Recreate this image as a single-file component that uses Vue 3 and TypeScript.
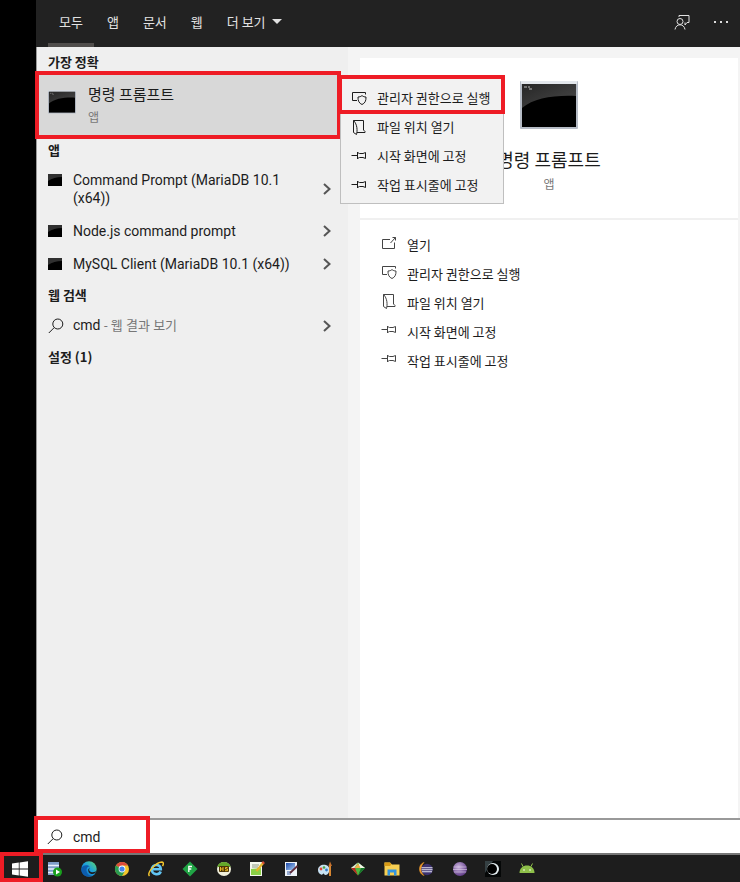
<script setup lang="ts">
import { ref } from 'vue'

interface Action {
  icon: string
  label: string
}

const tabs: string[] = ['모두', '앱', '문서', '웹']
const activeTab = ref('모두')
const query = ref('cmd')

const apps: string[] = [
  'Command Prompt (MariaDB 10.1 (x64))',
  'Node.js command prompt',
  'MySQL Client (MariaDB 10.1 (x64))',
]

const menuActions: Action[] = [
  { icon: 'i-admin', label: '관리자 권한으로 실행' },
  { icon: 'i-folder', label: '파일 위치 열기' },
  { icon: 'i-pin', label: '시작 화면에 고정' },
  { icon: 'i-pin', label: '작업 표시줄에 고정' },
]
const detailActions: Action[] = [{ icon: 'i-open', label: '열기' }, ...menuActions]

const pinned: string[] = [
  't-server', 't-edge', 't-chrome', 't-ie', 't-diamond', 't-hs', 't-notepad', 't-editor',
  't-paint', 't-gem', 't-explorer', 't-eclipse', 't-sphere', 't-ring', 't-android',
]
</script>

<template>
  <div class="desktop">
    <svg class="defs" aria-hidden="true">
      <defs>
        <linearGradient id="gloss" x1="0" y1="0" x2="1" y2="1">
          <stop offset="0" stop-color="#262626" />
          <stop offset="1" stop-color="#4a4a4a" />
        </linearGradient>
        <linearGradient id="edgeG" x1="0" y1="1" x2="1" y2="0">
          <stop offset="0" stop-color="#0c59a4" />
          <stop offset="0.5" stop-color="#1b9de2" />
          <stop offset="1" stop-color="#5fdc6c" />
        </linearGradient>
        <radialGradient id="sphereG" cx="0.4" cy="0.35" r="0.7">
          <stop offset="0" stop-color="#c9b3dc" />
          <stop offset="1" stop-color="#5b3583" />
        </radialGradient>
        <linearGradient id="blueG" x1="0" y1="0" x2="1" y2="1">
          <stop offset="0" stop-color="#1c49a8" />
          <stop offset="1" stop-color="#a9cdf5" />
        </linearGradient>
      </defs>
      <symbol id="i-console" viewBox="0 0 58 48">
        <rect x="0" y="0" width="58" height="48" rx="1" fill="#b6bcc6" />
        <rect x="1" y="0" width="56" height="3" fill="#e3e7ec" />
        <rect x="2" y="3" width="54" height="43" fill="#000" />
        <path d="M2 3H56V15C34 14 14 17 2 27Z" fill="url(#gloss)" />
        <path d="M4 6h3M8 6h2M9 8h3" stroke="#bbb" fill="none" />
      </symbol>
      <symbol id="i-mini" viewBox="0 0 14 12">
        <rect width="14" height="12" fill="#000" />
        <path d="M0 0H14V3Q6 3 0 7Z" fill="#303030" />
      </symbol>
      <symbol id="i-admin" viewBox="0 0 16 16">
        <path d="M6 10.5H1.5V2.5H14.5V4.5" />
        <path d="M11 5.5C12 6.5 13.5 7 15 7C15.200 11 13.800 13.300 11 14.500C8.200 13.300 6.800 11 7 7C8.500 7 10 6.500 11 5.500Z" />
      </symbol>
      <symbol id="i-folder" viewBox="0 0 16 16">
        <path d="M2.500 1.500H12.500V11L14 12.500V13.500H6M2.500 1.500V13.500L5.500 15.500C6.500 12 6.500 5.500 2.500 1.500" />
      </symbol>
      <symbol id="i-pin" viewBox="0 0 16 16">
        <path d="M0.500 7.500H6.500M6.500 4V11M6.500 4.500L8.500 5.500H12L14.500 4.500V10.500L12 9.500H8.500L6.500 10.500" />
      </symbol>
      <symbol id="i-open" viewBox="0 0 16 16">
        <path d="M9 4.500H1.500V13.500H13.500V7.500M9.500 8L14.500 2.500M11.500 2.500H14.500V5.500" />
      </symbol>
      <symbol id="i-search" viewBox="0 0 16 16">
        <circle cx="9.800" cy="6" r="5" />
        <path d="M6.200 9.600L0.800 15" />
      </symbol>
      <symbol id="i-chevron" viewBox="0 0 8 12">
        <path d="M1 1L6.500 6L1 11" />
      </symbol>
      <symbol id="i-feedback" viewBox="0 0 16 16">
        <path d="M5 3V1.500H15V8.500H13L11 11V8.500" />
        <circle cx="6" cy="7.500" r="3" />
        <path d="M1 15.500C1.500 12.500 3.500 10.800 6 10.800S10.500 12.500 11 15.500" />
      </symbol>

      <symbol id="t-server" viewBox="0 0 16 16">
        <rect x="1" y="1" width="11" height="13" fill="#7f9dc9" />
        <path d="M1 4.500H12M1 8H12M1 11.500H12" stroke="#e8f0fb" stroke-width="1.500" />
        <circle cx="10.500" cy="11" r="4.500" fill="#19a01d" />
        <path d="M9 8.500L13 11L9 13.500Z" fill="#fff" />
      </symbol>
      <symbol id="t-edge" viewBox="0 0 16 16">
        <circle cx="8" cy="8" r="7.700" fill="url(#edgeG)" />
        <path d="M0.300 8C1 4 6 3 9 5.500C7 5 5 7 5.500 10C6 13 8.500 15 11.500 14.800C5 17.500 0 13 0.300 8Z" fill="#0d5cad" />
        <path d="M9 6.500C7.500 8 8 10.500 10 11C12.500 11.600 14.500 11 15.700 9.500C15 12 13 13.500 10.500 13C7 12.300 6 8 9 6.500Z" fill="#1d1d1d" />
      </symbol>
      <symbol id="t-chrome" viewBox="0 0 16 16">
        <circle cx="8" cy="8" r="7" fill="#f2c52c" />
        <path d="M8 8L2 4.400A7 7 0 0 1 14.100 4.600H8Z" fill="#dc4a3c" />
        <path d="M1.900 4.500A7 7 0 0 0 8 15L11 9.700L8 8Z" fill="#2a9c52" />
        <circle cx="8" cy="8" r="3.400" fill="#fff" />
        <circle cx="8" cy="8" r="2.600" fill="#4383ec" />
      </symbol>
      <symbol id="t-ie" viewBox="0 0 16 16">
        <path d="M12.700 10.500C11.500 14.200 4.200 14.500 3.800 8.500C3.800 2.500 12.800 2.500 12.800 8.300H4.500" fill="none" stroke="#62c5f4" stroke-width="2.600" />
        <path d="M1.500 15C-1.500 12 8 1 14 1C16 1.300 15.500 3.500 14.500 5" fill="none" stroke="#f3c62d" stroke-width="1.500" />
      </symbol>
      <symbol id="t-diamond" viewBox="0 0 16 16">
        <path d="M8 0.500L15.500 8L8 15.500L0.500 8Z" fill="#20a445" />
        <path d="M6.800 11V5.500H10M6.800 8H9.300" fill="none" stroke="#fff" stroke-width="1.300" />
      </symbol>
      <symbol id="t-hs" viewBox="0 0 16 16">
        <circle cx="8" cy="8" r="7" fill="#f1f0dc" />
        <path d="M1.300 6A7 7 0 0 1 14.700 6Z" fill="#63a829" />
        <rect x="3" y="5" width="10" height="6" rx="1" fill="#4a3508" />
        <path d="M4.500 6V10M7 6V10M4.500 8H7M11.500 6.500H9.500V8H11.500V9.700H9" fill="none" stroke="#e9b926" stroke-width="1" />
      </symbol>
      <symbol id="t-notepad" viewBox="0 0 16 16">
        <rect x="1" y="1" width="12" height="14" fill="#f4f7ee" />
        <path d="M3 4H10M3 6H9" stroke="#8d9a84" />
        <path d="M2 8L12 7V14H2Z" fill="#8bd046" />
        <path d="M7.500 10L14.500 1.500" stroke="#e5b32c" stroke-width="2.300" />
        <path d="M13.500 2.500L15 1" stroke="#d84c36" stroke-width="2.500" />
      </symbol>
      <symbol id="t-editor" viewBox="0 0 16 16">
        <rect x="2" y="1" width="12" height="14" fill="#eef2f8" />
        <rect x="3" y="2" width="9" height="7" fill="url(#blueG)" />
        <path d="M4 11H9M4 13H8" stroke="#3c63a7" />
        <path d="M7 12L14.500 5" stroke="#612d3c" stroke-width="1.800" />
      </symbol>
      <symbol id="t-paint" viewBox="0 0 16 16">
        <path d="M1 9C1 5 5 3 9 4C12 4.800 13 8 12 11C11 14 8 15 7 13C6 11.500 6 14.500 4 13.500C2 13 1 11 1 9Z" fill="#c7e2f3" />
        <circle cx="4" cy="8" r="1.400" fill="#dd4b36" />
        <circle cx="7" cy="6.500" r="1.300" fill="#4ca545" />
        <circle cx="9.500" cy="9" r="1.400" fill="#337ecb" />
        <path d="M13 15V5" stroke="#d88631" stroke-width="2" />
        <path d="M11.500 5L13 0.500L15 5Z" fill="#c7712e" />
      </symbol>
      <symbol id="t-gem" viewBox="0 0 16 16">
        <path d="M8 1.500L15 7L8 14.500L1 7Z" fill="#4eb840" />
        <path d="M8 1.500L4.500 7L1 7Z" fill="#e4e4dc" />
        <path d="M8 1.500L15 7H10Z" fill="#f4f5eb" />
        <path d="M4.500 7L8 2.500L10.500 7Z" fill="#f2b14b" />
        <path d="M1 7H5L8 14.500Z" fill="#b92a20" />
        <path d="M11 7H15L8 14.500Z" fill="#17742b" />
      </symbol>
      <symbol id="t-explorer" viewBox="0 0 16 16">
        <path d="M0.500 1.500H6L8 3.500H15.500V14.500H0.500Z" fill="#f7cf53" />
        <path d="M0.500 1.500H6L7.500 3.500L6 5H0.500Z" fill="#d89a16" />
        <path d="M3.500 14.500V8.500H12.500V14.500H10V11.500H6V14.500Z" fill="#3394df" />
      </symbol>
      <symbol id="t-eclipse" viewBox="0 0 16 16">
        <path d="M6 1.500C0 3 0 13 6 14.500C2.500 12 2.500 4 6 1.500Z" fill="#f19b2c" stroke="#f19b2c" stroke-width="0.600" />
        <circle cx="9" cy="8.500" r="5.800" fill="#3c326f" />
        <path d="M3.500 6.700H14.500M3.500 8.700H14.500M4 10.700H14" stroke="#e3e3f0" stroke-width="1.100" />
      </symbol>
      <symbol id="t-sphere" viewBox="0 0 16 16">
        <circle cx="8" cy="8" r="7" fill="url(#sphereG)" />
        <path d="M1.500 6H14.500M1 8.500H15M2 11H14" stroke="#e2d5ec" stroke-width="0.700" opacity="0.800" />
      </symbol>
      <symbol id="t-ring" viewBox="0 0 16 16">
        <rect width="16" height="16" fill="#050707" />
        <path d="M0 0H8L0 12Z" fill="#354043" />
        <circle cx="8" cy="8" r="6" fill="#e4edf0" />
        <circle cx="7" cy="8" r="5" fill="#000" />
      </symbol>
      <symbol id="t-android" viewBox="0 0 16 16">
        <path d="M0.500 12C0.500 7 4 4.500 8 4.500S15.500 7 15.500 12Z" fill="#8fc04a" />
        <path d="M4 5.500L2.500 2.500M12 5.500L13.500 2.500" stroke="#8fc04a" />
        <circle cx="5" cy="9" r="0.800" fill="#fff" />
        <circle cx="11" cy="9" r="0.800" fill="#fff" />
      </symbol>
    </svg>

    <div class="window">
      <header class="topbar">
        <nav class="tabs">
          <button
            v-for="tab in tabs"
            :key="tab"
            type="button"
            class="tab"
            :class="{ active: tab === activeTab }"
            @click="activeTab = tab"
          >{{ tab }}</button>
          <button type="button" class="tab">더 보기<span class="caret"></span></button>
        </nav>
        <div class="tools">
          <button type="button" class="tool" aria-label="피드백">
            <svg class="line icon16"><use href="#i-feedback" /></svg>
          </button>
          <button type="button" class="tool" aria-label="옵션">
            <span class="dots"><i></i><i></i><i></i></span>
          </button>
        </div>
      </header>

      <main class="content">
        <section class="results">
          <h2 class="label">가장 정확</h2>
          <div class="best">
            <button type="button" class="best-item">
              <svg class="best-icon"><use href="#i-console" /></svg>
              <span class="best-text">
                <span class="best-title">명령 프롬프트</span>
                <span class="muted">앱</span>
              </span>
            </button>
            <span class="frame around"></span>
            <div class="menu">
              <button v-for="a in menuActions" :key="a.label" type="button" class="menu-item">
                <svg class="line icon16"><use :href="'#' + a.icon" /></svg>
                <span>{{ a.label }}</span>
              </button>
              <span class="frame menu-frame"></span>
            </div>
          </div>

          <h2 class="label">앱</h2>
          <button v-for="app in apps" :key="app" type="button" class="row">
            <svg class="mini"><use href="#i-mini" /></svg>
            <span class="row-text">{{ app }}</span>
            <svg class="chevron"><use href="#i-chevron" /></svg>
          </button>

          <h2 class="label">웹 검색</h2>
          <button type="button" class="row">
            <svg class="line icon16"><use href="#i-search" /></svg>
            <span class="row-text">cmd <span class="hint">- 웹 결과 보기</span></span>
            <svg class="chevron"><use href="#i-chevron" /></svg>
          </button>

          <h2 class="label">설정 (1)</h2>
        </section>

        <section class="detail">
          <div class="summary">
            <svg class="big-icon"><use href="#i-console" /></svg>
            <h1 class="title">명령 프롬프트</h1>
            <span class="muted">앱</span>
          </div>
          <div class="actions">
            <button v-for="a in detailActions" :key="a.label" type="button" class="action">
              <svg class="line icon16"><use :href="'#' + a.icon" /></svg>
              <span>{{ a.label }}</span>
            </button>
          </div>
        </section>
      </main>

      <label class="search">
        <svg class="line icon16"><use href="#i-search" /></svg>
        <input v-model="query" type="text" aria-label="검색" />
        <span class="frame search-frame"></span>
      </label>
    </div>

    <footer class="taskbar">
      <button type="button" class="start" aria-label="시작">
        <svg class="icon16" viewBox="0 0 16 16">
          <path d="M0 2.500L6.800 1.500V7.600H0ZM7.600 1.400L16 0.200V7.600H7.600ZM0 8.400H6.800V14.500L0 13.500ZM7.600 8.400H16V15.800L7.600 14.600Z" fill="#fff" />
        </svg>
        <span class="frame start-frame"></span>
      </button>
      <div class="pinned">
        <button v-for="p in pinned" :key="p" type="button" class="pin" :aria-label="p.slice(2)">
          <svg class="icon16"><use :href="'#' + p" /></svg>
        </button>
      </div>
    </footer>
  </div>
</template>

<style>
body {
  margin: 0;
  background: #000;
}
</style>

<style scoped>
.desktop {
  display: flex;
  flex-direction: column;
  min-height: 100vh;
  color: #1c1c1c;
  background: #000;
  font-family: "Noto Sans CJK KR", sans-serif;
  font-size: 13px;
  line-height: 18px;
}
.defs {
  position: absolute;
  width: 0;
  height: 0;
}
button {
  margin: 0;
  padding: 0;
  border: 0;
  background: none;
  color: inherit;
  font: inherit;
  text-align: left;
}
svg {
  display: block;
  flex: none;
}
.icon16 {
  width: 16px;
  height: 16px;
}
.line {
  fill: none;
  stroke: currentColor;
  stroke-width: 1;
}
.muted {
  color: #777;
  font-size: 12px;
}
.frame {
  position: absolute;
  border: 4px solid #ee1c25;
  pointer-events: none;
}
.window {
  flex: 1;
  display: flex;
  flex-direction: column;
  margin-left: 36px;
}
.topbar {
  display: flex;
  justify-content: space-between;
  height: 47px;
  padding: 0 12px;
  background: #222;
  color: #e2e2e2;
}
.tabs,
.tools {
  display: flex;
}
.tabs {
  gap: 2px;
}
.tab {
  display: flex;
  align-items: center;
  gap: 6px;
  padding: 0 11px;
  border-bottom: 4px solid transparent;
}
.tab.active {
  border-bottom-color: #514e4c;
}
.caret {
  border: 5px solid transparent;
  border-top-color: #e2e2e2;
  border-bottom: 0;
}
.tools {
  gap: 24px;
  align-items: center;
  padding-bottom: 3px;
}
.dots {
  display: flex;
  gap: 4px;
}
.dots i {
  width: 2px;
  height: 2px;
  background: #ddd;
}
.content {
  flex: 1;
  display: flex;
  background: #f4f4f4;
}
.results {
  flex: none;
  width: 311px;
  border-left: 1px solid #999;
  background: #efefef;
}
.label {
  margin: 0;
  padding: 6px 11px 4px;
  font-size: 13px;
  font-weight: 700;
}
.best {
  position: relative;
  margin: 0 11px 0 2px;
}
.best-item {
  display: flex;
  gap: 12px;
  width: 100%;
  height: 60px;
  padding: 10px 9px;
  background: #d8d8d8;
}
.best-icon {
  width: 28px;
  height: 24px;
  margin-top: 5px;
}
.best-text {
  display: flex;
  flex-direction: column;
  gap: 5px;
}
.best-title {
  font-size: 15px;
}
.around {
  inset: -4px;
}
.menu {
  position: absolute;
  top: 1px;
  left: 100%;
  z-index: 2;
  width: 162px;
  margin-left: 3px;
  padding: 6px 0 4px;
  border: 1px solid #bfbfbf;
  background: #f2f2f2;
}
.menu-item,
.action {
  display: flex;
  align-items: center;
  gap: 10px;
  width: 100%;
  height: 29px;
  padding: 0 10px;
  white-space: nowrap;
}
.menu-frame {
  top: -2px;
  left: -3px;
  right: -2px;
  height: 31px;
}
.row {
  display: flex;
  align-items: center;
  width: 100%;
  padding: 8px 17px 7px 11px;
}
.mini {
  align-self: flex-start;
  width: 14px;
  height: 12px;
  margin: 3px 2px 0 0;
}
.row-text {
  flex: 1;
  padding: 0 24px 0 9px;
  font-family: Roboto, "Noto Sans CJK KR", sans-serif;
  font-size: 14px;
}
.hint {
  color: #777;
  font-size: 13px;
}
.chevron {
  width: 8px;
  height: 12px;
  fill: none;
  stroke: #555;
  stroke-width: 2;
}
.detail {
  flex: 1;
  margin: 11px 2px 0 12px;
  background: #fff;
}
.summary {
  display: flex;
  flex-direction: column;
  align-items: center;
  height: 137px;
  padding-top: 23px;
  border-bottom: 2px solid #f0f0f0;
}
.big-icon {
  width: 58px;
  height: 48px;
}
.title {
  margin: 18px 0 4px;
  font-size: 18px;
  font-weight: 400;
  line-height: 24px;
}
.actions {
  padding: 10px 11px;
}
.action .line {
  margin-bottom: 4px;
  color: #444;
}
.search {
  position: relative;
  display: flex;
  align-items: center;
  gap: 10px;
  height: 33px;
  padding: 0 11px;
  border-top: 2px solid #999;
  border-bottom: 2px solid #777;
  background: #fff;
}
.search input {
  flex: 1;
  min-width: 0;
  padding: 0;
  border: 0;
  outline: 0;
  background: none;
  color: inherit;
  font-family: Roboto, "Noto Sans CJK KR", sans-serif;
  font-size: 14px;
}
.search-frame {
  top: -4px;
  left: -2px;
  width: 108px;
  height: 29px;
}
.taskbar {
  display: flex;
  height: 27px;
  background: #1d1d1d;
}
.start {
  position: relative;
  display: flex;
  align-items: center;
  justify-content: center;
  width: 38px;
  padding-left: 2px;
}
.start-frame {
  top: -3px;
  left: 0;
  width: 35px;
  height: 22px;
}
.pinned {
  display: flex;
  flex: 1;
  max-width: 506px;
}
.pin {
  flex: 1;
  display: flex;
  align-items: center;
  justify-content: center;
}
</style>
